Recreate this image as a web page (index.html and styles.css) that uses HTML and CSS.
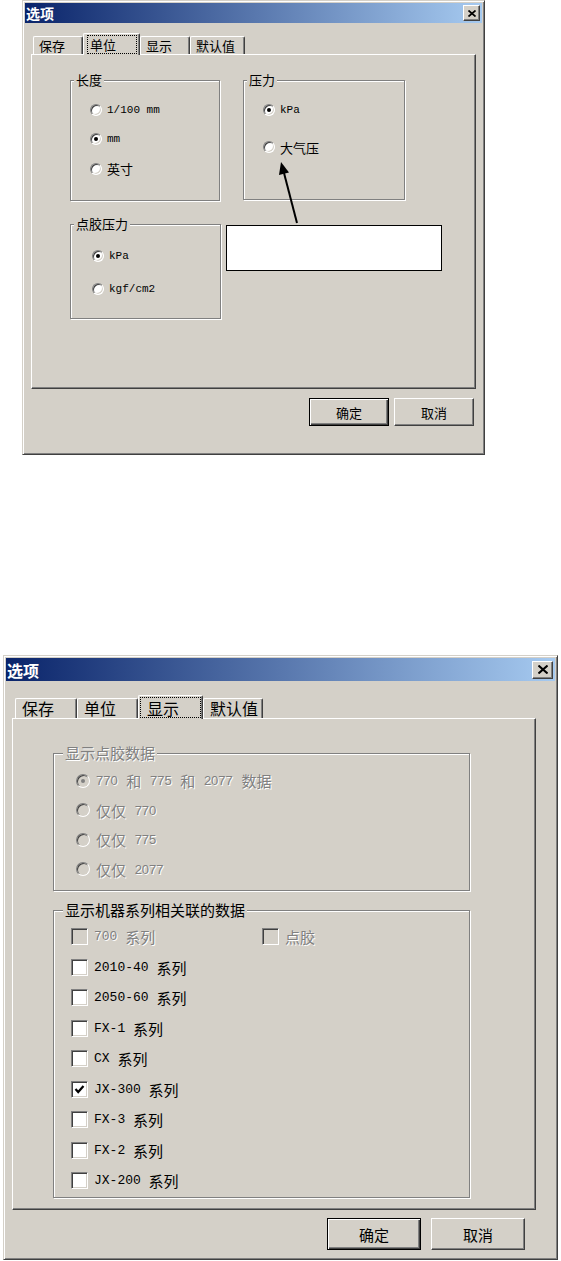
FILE: index.html
```html
<!DOCTYPE html>
<html lang="zh-CN">
<head>
  <meta charset="UTF-8" />
  <title>选项</title>
  <link rel="stylesheet" href="styles.css">
</head>
<body>

  <!-- onglet 单位 -->
  <div class="dlg dlg-units">
    <div class="titlebar">
      <span class="title">选项</span>
      <span class="close-btn">
        <svg width="8" height="7" viewBox="0 0 8 7"><path d="M0.5 0.5 L7.5 6.5 M7.5 0.5 L0.5 6.5" stroke="#000" stroke-width="1.7"/></svg>
      </span>
    </div>

    <div class="tabs">
      <div class="tab t1">保存</div>
      <div class="tab active t2"><span class="focus">单位</span></div>
      <div class="tab t3">显示</div>
      <div class="tab t4">默认值</div>
    </div>

    <div class="panel">
      <div class="unit-grid">
        <div class="group g-len">
          <div class="legend">长度</div>
          <div class="opt"><span class="radio"></span><span class="lat">1/100 mm</span></div>
          <div class="opt"><span class="radio on"></span><span class="lat">mm</span></div>
          <div class="opt"><span class="radio"></span>英寸</div>
        </div>

        <div class="group g-press">
          <div class="legend">压力</div>
          <div class="opt"><span class="radio on"></span><span class="lat">kPa</span></div>
          <div class="opt"><span class="radio"></span>大气压</div>
        </div>

        <div class="group g-glue">
          <div class="legend">点胶压力</div>
          <div class="opt"><span class="radio on"></span><span class="lat">kPa</span></div>
          <div class="opt"><span class="radio"></span><span class="lat">kgf/cm2</span></div>
        </div>

        <div class="note"></div>
      </div>

      <svg class="arrow" viewBox="0 0 445 335">
        <line x1="265" y1="168" x2="252" y2="118" stroke="#000" stroke-width="2"/>
        <polygon points="249,107 257,117.5 247,120" fill="#000"/>
      </svg>
    </div>

    <div class="buttons">
      <div class="btn default">确定</div>
      <div class="btn">取消</div>
    </div>
  </div>

  <!-- onglet 显示 -->
  <div class="dlg dlg-display">
    <div class="titlebar">
      <span class="title">选项</span>
      <span class="close-btn">
        <svg width="10" height="9" viewBox="0 0 10 9"><path d="M0.5 0.5 L9.5 8.5 M9.5 0.5 L0.5 8.5" stroke="#000" stroke-width="2"/></svg>
      </span>
    </div>

    <div class="tabs">
      <div class="tab t1">保存</div>
      <div class="tab t2">单位</div>
      <div class="tab active t3"><span class="focus">显示</span></div>
      <div class="tab t4">默认值</div>
    </div>

    <div class="panel">
      <div class="group g-data off">
        <div class="legend">显示点胶数据</div>
        <div class="opt"><span class="radio on"></span><span class="num">770 </span>和<span class="num"> 775 </span>和<span class="num"> 2077 </span>数据</div>
        <div class="opt"><span class="radio"></span>仅仅<span class="num"> 770</span></div>
        <div class="opt"><span class="radio"></span>仅仅<span class="num"> 775</span></div>
        <div class="opt"><span class="radio"></span>仅仅<span class="num"> 2077</span></div>
      </div>

      <div class="group g-series">
        <div class="legend">显示机器系列相关联的数据</div>
        <div class="opt-row">
          <div class="opt wide off"><span class="check"></span><span class="lat">700 </span>系列</div>
          <div class="opt plain off"><span class="check"></span>点胶</div>
        </div>
        <div class="opt"><span class="check"></span><span class="lat">2010-40 </span>系列</div>
        <div class="opt"><span class="check"></span><span class="lat">2050-60 </span>系列</div>
        <div class="opt"><span class="check"></span><span class="lat">FX-1 </span>系列</div>
        <div class="opt"><span class="check"></span><span class="lat">CX </span>系列</div>
        <div class="opt"><span class="check"><svg width="11" height="11" viewBox="0 0 11 11"><polyline points="1.5,5 4.2,8 9.5,2" fill="none" stroke="#000" stroke-width="2.2"/></svg></span><span class="lat">JX-300 </span>系列</div>
        <div class="opt"><span class="check"></span><span class="lat">FX-3 </span>系列</div>
        <div class="opt"><span class="check"></span><span class="lat">FX-2 </span>系列</div>
        <div class="opt"><span class="check"></span><span class="lat">JX-200 </span>系列</div>
      </div>
    </div>

    <div class="buttons">
      <div class="btn default">确定</div>
      <div class="btn">取消</div>
    </div>
  </div>

</body>
</html>
```

FILE: styles.css
```css
body {
  margin: 0;
  background: #ffffff;
  font-family: "Noto Sans CJK SC", sans-serif;
  color: #000;
}

/* fenêtre style Windows classique */
.dlg {
  box-sizing: border-box;
  background: #d4d0c8;
  border: 1px solid;
  border-color: #d4d0c8 #404040 #404040 #d4d0c8;
  box-shadow: inset 1px 1px #fff, inset -1px -1px #808080;
  padding: 2px;
}

.dlg-units {
  width: 463px;
  height: 455px;
  margin-left: 22px;
  font-size: 13px;
}

.dlg-display {
  width: 555px;
  height: 605px;
  margin: 200px 0 0 3px;
  font-size: 15px;
}

.titlebar {
  display: flex;
  align-items: center;
  justify-content: space-between;
  background: linear-gradient(to right, #0a246a, #a6caf0);
  color: #fff;
}

.title {
  font-weight: bold;
}

.close-btn {
  box-sizing: border-box;
  display: flex;
  align-items: center;
  justify-content: center;
  background: #d4d0c8;
  border: 1px solid;
  border-color: #fff #404040 #404040 #fff;
  box-shadow: inset -1px -1px #808080;
}

.dlg-units .titlebar { height: 20px; padding: 0 2px 0 1px; }
.dlg-units .title { font-size: 14px; }
.dlg-units .close-btn { width: 17px; height: 16px; }

.dlg-display .titlebar { height: 23px; padding: 0 2px 0 1px; }
.dlg-display .title { font-size: 16px; }
.dlg-display .close-btn { width: 21px; height: 18px; }

/* onglets */
.tabs {
  display: flex;
  align-items: flex-end;
}

.tab {
  box-sizing: border-box;
  border: 1px solid;
  border-color: #fff #404040 transparent #fff;
  border-bottom: none;
  border-radius: 2px 2px 0 0;
  box-shadow: inset -1px 0 #808080;
  white-space: nowrap;
}

.tab.active {
  position: relative;
  z-index: 1;
  background: #d4d0c8;
  margin-bottom: -1px;
}

.focus {
  display: block;
  box-sizing: border-box;
  height: 100%;
  border: 1px dotted #000;
}

.dlg-units .tabs { height: 21px; margin: 10px 0 0 6px; padding-left: 2px; }
.dlg-units .tab { height: 18px; padding: 1px 0 0 5px; line-height: 16px; }
.dlg-units .tab.active { height: 22px; padding: 1px 2px 1px 3px; }
.dlg-units .focus { padding-left: 2px; line-height: 17px; }
.dlg-units .t1 { width: 50px; }
.dlg-units .t2 { width: 57px; }
.dlg-units .t3 { width: 50px; }
.dlg-units .t4 { width: 55px; }

.dlg-display .tabs { height: 23px; margin: 14px 0 0 6px; padding-left: 3px; font-size: 16px; }
.dlg-display .tab { height: 20px; padding: 0 0 0 6px; line-height: 19px; }
.dlg-display .tab.active { height: 24px; padding: 1px 1px 1px 1px; }
.dlg-display .focus { padding-left: 6px; line-height: 20px; }
.dlg-display .t1 { width: 62px; }
.dlg-display .t2 { width: 61px; }
.dlg-display .t3 { width: 65px; }
.dlg-display .t4 { width: 60px; }

/* panneau */
.panel {
  position: relative;
  box-sizing: border-box;
  border: 1px solid;
  border-color: #fff #404040 #404040 #fff;
  box-shadow: inset -1px -1px #808080;
}

.dlg-units .panel {
  width: 445px;
  height: 335px;
  margin-left: 6px;
  padding: 25px 0 0 38px;
}

.dlg-display .panel {
  width: 524px;
  height: 492px;
  margin-left: 6px;
  padding: 34px 0 0 40px;
  display: flex;
  flex-direction: column;
  gap: 19px;
}

/* cadres de groupe */
.group {
  box-sizing: border-box;
  border: 1px solid #808080;
  box-shadow: inset 1px 1px #fff, 1px 1px #fff;
}

.legend {
  width: fit-content;
  background: #d4d0c8;
  padding: 0 2px;
  margin-bottom: var(--pad);
}

.dlg-units .legend { line-height: 14px; margin-top: -8px; margin-left: 3px; }
.dlg-display .legend { line-height: 18px; margin-top: -10px; margin-left: 9px; }

.opt {
  display: flex;
  align-items: center;
  height: var(--row);
  padding-left: var(--indent);
  white-space: pre;
}

.unit-grid {
  display: grid;
  grid-template-columns: 151px 216px;
  grid-template-rows: 121px 95px;
  column-gap: 5px;
  row-gap: 23px;
}

.g-len { width: 150px; height: 121px; --pad: 8px; --row: 29.5px; --indent: 19px; }
.g-press { width: 162px; height: 120px; margin-left: 17px; --pad: 4.5px; --row: 37px; --indent: 19px; }
.g-glue { width: 151px; height: 95px; --pad: 8.5px; --row: 33px; --indent: 21px; }

.note {
  box-sizing: border-box;
  height: 46px;
  margin-top: 1px;
  background: #fff;
  border: 1px solid #000;
}

.arrow {
  position: absolute;
  left: 0;
  top: 0;
  width: 445px;
  height: 335px;
  pointer-events: none;
}

.g-data { width: 417px; height: 138px; --pad: 4px; --row: 29.5px; --indent: 22px; }
.g-series { width: 417px; height: 288px; --pad: 2.5px; --row: 30.5px; --indent: 17px; }

.opt-row { display: flex; }
.opt.wide { width: 191px; }
.opt.plain { padding-left: 0; }

/* texte latin */
.lat { font-family: "Liberation Mono", monospace; }
.dlg-units .lat { font-size: 11px; }
.dlg-display .lat { font-size: 13px; }
.num { font-family: "Liberation Sans", sans-serif; font-size: 13px; word-spacing: 5px; }

/* boutons radio et cases */
.radio {
  box-sizing: border-box;
  display: flex;
  align-items: center;
  justify-content: center;
  flex: none;
  border-radius: 50%;
  background: #fff;
  border: 1px solid;
  border-color: #808080 #fff #fff #808080;
  box-shadow: inset 1px 1px #404040, inset -1px -1px #d4d0c8;
}

.radio.on::after {
  content: "";
  width: 4px;
  height: 4px;
  border-radius: 50%;
  background: #000;
}

.dlg-units .radio { width: 12px; height: 12px; margin-right: 5px; }
.dlg-display .radio { width: 14px; height: 14px; margin-right: 6px; }

.check {
  box-sizing: border-box;
  display: flex;
  align-items: center;
  justify-content: center;
  flex: none;
  width: 17px;
  height: 17px;
  margin-right: 6px;
  background: #fff;
  border: 1px solid;
  border-color: #808080 #fff #fff #808080;
  box-shadow: inset 1px 1px #404040, inset -1px -1px #d4d0c8;
}

/* désactivé */
.off .legend,
.off.opt,
.off .opt {
  color: #808080;
  text-shadow: 1px 1px 0 #fff;
}

.off .radio,
.off .check,
.off.opt .check {
  background: #d4d0c8;
}

.off .radio.on::after {
  background: #808080;
}

/* boutons */
.buttons {
  display: flex;
  justify-content: flex-end;
}

.btn {
  box-sizing: border-box;
  display: flex;
  align-items: center;
  justify-content: center;
  background: #d4d0c8;
  border: 1px solid;
  border-color: #fff #404040 #404040 #fff;
  box-shadow: inset -1px -1px #808080;
}

.btn.default {
  border-color: #000;
  box-shadow: inset 1px 1px #fff, inset -1px -1px #404040, inset -2px -2px #808080;
}

.dlg-units .buttons { margin-top: 9px; padding-right: 8px; gap: 5px; }
.dlg-units .btn { width: 80px; height: 28px; }

.dlg-display .buttons { margin-top: 8px; padding-right: 30px; gap: 10px; }
.dlg-display .btn { width: 94px; height: 32px; }
```
